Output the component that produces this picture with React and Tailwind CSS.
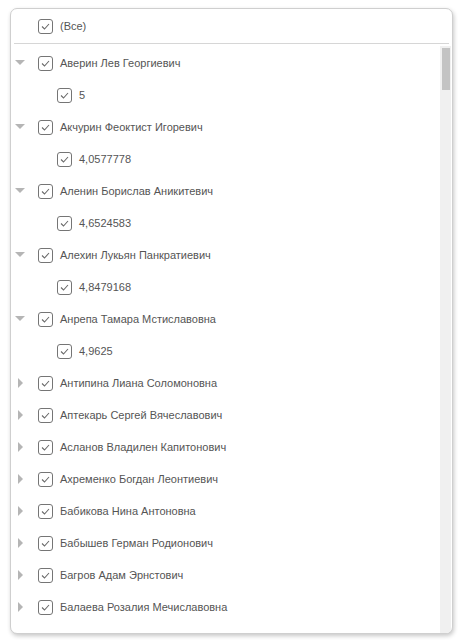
const rows = [
  { name: 'Аверин Лев Георгиевич', open: true, value: '5' },
  { name: 'Акчурин Феоктист Игоревич', open: true, value: '4,0577778' },
  { name: 'Аленин Борислав Аникитевич', open: true, value: '4,6524583' },
  { name: 'Алехин Лукьян Панкратиевич', open: true, value: '4,8479168' },
  { name: 'Анрепа Тамара Мстиславовна', open: true, value: '4,9625' },
  { name: 'Антипина Лиана Соломоновна' },
  { name: 'Аптекарь Сергей Вячеславович' },
  { name: 'Асланов Владилен Капитонович' },
  { name: 'Ахременко Богдан Леонтиевич' },
  { name: 'Бабикова Нина Антоновна' },
  { name: 'Бабышев Герман Родионович' },
  { name: 'Багров Адам Эрнстович' },
  { name: 'Балаева Розалия Мечиславовна' },
];

function Check() {
  return (
    <span className="flex h-[15px] w-[15px] shrink-0 items-center justify-center rounded-[3px] border border-[#757575] bg-white">
      <svg width="11" height="11" viewBox="0 0 11 11" fill="none">
        <path d="M2 5.5l2.5 2.5L9 3" stroke="#6a6a6a" strokeWidth="1.1" />
      </svg>
    </span>
  );
}

function Arrow({ open }) {
  return (
    <span className="flex w-6 shrink-0 items-center justify-start pl-[1px]">
      {open ? (
        <svg width="10" height="6" viewBox="0 0 10 6">
          <path d="M0 0h10L5 5z" fill="#b5b5b5" />
        </svg>
      ) : (
        <svg width="10" height="10" viewBox="0 0 10 10" className="ml-[3px]">
          <path d="M0 0v10l5-5z" fill="#b5b5b5" />
        </svg>
      )}
    </span>
  );
}

export default function App() {
  return (
    <div className="h-[643px] w-[465px] bg-white pl-[10px] pt-2 font-['Liberation_Sans',Arial,sans-serif] text-[11px] text-[#555]">
      <div className="flex h-[626px] w-[443px] flex-col overflow-hidden rounded-[7px] border border-[#cfcfcf] bg-white shadow-[1px_2px_4px_rgba(0,0,0,0.22)]">
        <div className="mx-[3px] flex h-[35px] shrink-0 items-center gap-[7px] border-b border-[#d6d6d6] pl-[24px]">
          <Check />
          <span>(Все)</span>
        </div>
        <div className="flex min-h-0 flex-1 pt-[2px]">
          <div className="min-w-0 flex-1 overflow-hidden pl-[3px] pt-[1px]">
            {rows.map((r) => (
              <div key={r.name}>
                <div className="flex h-8 items-center">
                  <Arrow open={r.open} />
                  <Check />
                  <span className="ml-[7px] whitespace-nowrap">{r.name}</span>
                </div>
                {r.open && (
                  <div className="flex h-8 items-center pl-[43px]">
                    <Check />
                    <span className="ml-[7px]">{r.value}</span>
                  </div>
                )}
              </div>
            ))}
          </div>
          <div className="mr-[1px] w-[11px] shrink-0 bg-[#f0f0f0] pt-[2px]">
            <div className="mx-auto h-[42px] w-[8px] bg-[#c3c3c3]" />
          </div>
        </div>
      </div>
    </div>
  );
}
